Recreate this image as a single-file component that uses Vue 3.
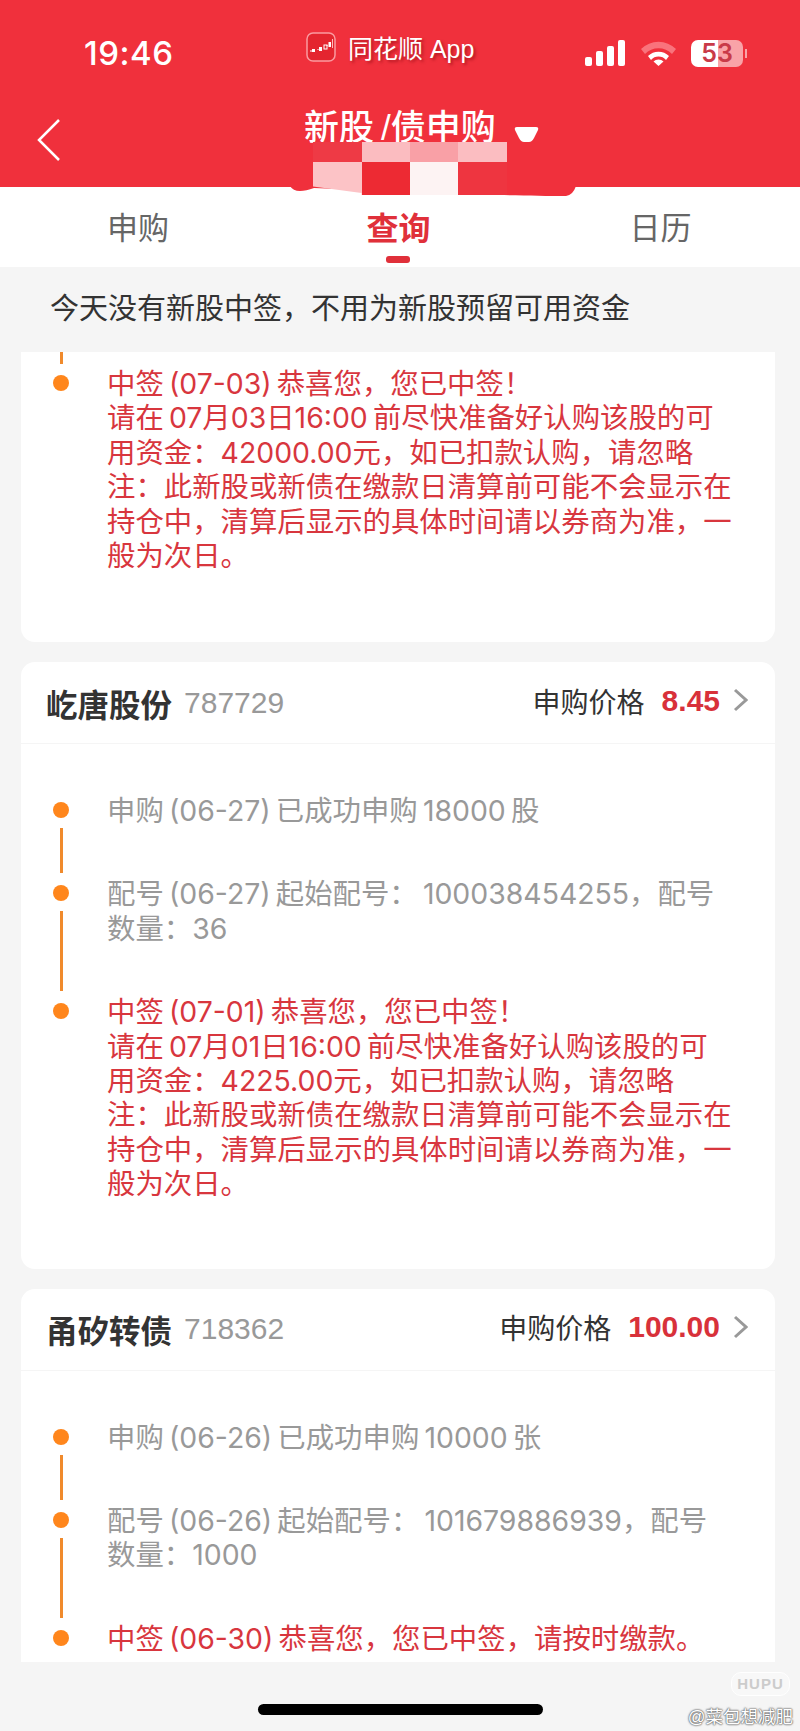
<script setup>
const cards = [
  {
    name: '屹唐股份',
    code: '787729',
    price: '8.45',
    rows: [
      { text: ['申购\u2009(06-27)\u2009已成功申购\u200918000\u2009股'], hit: false },
      { text: ['配号\u2009(06-27)\u2009起始配号：\u2009100038454255，配号', '数量：36'], hit: false },
      {
        text: [
          '中签\u2009(07-01)\u2009恭喜您，您已中签！',
          '请在\u200907月01日16:00\u2009前尽快准备好认购该股的可',
          '用资金：4225.00元，如已扣款认购，请忽略',
          '注：此新股或新债在缴款日清算前可能不会显示在',
          '持仓中，清算后显示的具体时间请以券商为准，一',
          '般为次日。',
        ],
        hit: true,
      },
    ],
  },
  {
    name: '甬矽转债',
    code: '718362',
    price: '100.00',
    rows: [
      { text: ['申购\u2009(06-26)\u2009已成功申购\u200910000\u2009张'], hit: false },
      { text: ['配号\u2009(06-26)\u2009起始配号：\u2009101679886939，配号', '数量：1000'], hit: false },
      { text: ['中签\u2009(06-30)\u2009恭喜您，您已中签，请按时缴款。'], hit: true },
    ],
  },
];

const firstCard = [
  '中签\u2009(07-03)\u2009恭喜您，您已中签！',
  '请在\u200907月03日16:00\u2009前尽快准备好认购该股的可',
  '用资金：42000.00元，如已扣款认购，请忽略',
  '注：此新股或新债在缴款日清算前可能不会显示在',
  '持仓中，清算后显示的具体时间请以券商为准，一',
  '般为次日。',
];

const mosaic = ['#ee3a45', '#fbbcc0', '#f9a0a6', '#fbbdc1', '#fcc3c6', '#ed2a33', '#fdf3f3', '#ee3540'];
</script>

<template>
  <div class="page">
    <header class="head">
      <div class="status">
        <span class="time">19:46</span>
        <div class="source">
          <svg class="app-logo" width="30" height="30" viewBox="0 0 30 30">
            <rect x="1" y="1" width="28" height="28" rx="6" fill="#e4252f" stroke="#fa9aa0" stroke-width="1.500" />
            <path d="M4 19h2M12 17v1M21 13v1" stroke="#fff" stroke-width="1" fill="none" />
            <rect x="6" y="17" width="3" height="3" fill="#fff" />
            <rect x="13" y="15" width="3" height="4" fill="#fff" />
            <rect x="18" y="13" width="3" height="4" fill="none" stroke="#fff" stroke-width="1" />
            <rect x="22.500" y="10" width="2.500" height="5" fill="#fff" />
            <path d="M26.500 7v9" stroke="#fbb" stroke-width="1" />
          </svg>
          <span class="app-name">同花顺 App</span>
        </div>
        <div class="indicators">
          <svg width="41" height="26" viewBox="0 0 41 26">
            <rect x="0" y="17" width="7" height="9" rx="2" fill="#fff" />
            <rect x="11" y="11" width="7" height="15" rx="2" fill="#fff" />
            <rect x="22" y="6" width="7" height="20" rx="2" fill="#fff" />
            <rect x="33" y="0" width="7" height="26" rx="2" fill="#fff" />
          </svg>
          <svg class="wifi" width="35" height="25" viewBox="0 0 35 25">
            <path d="M0 8a25 25 0 0 1 35 0l-4 5a19 19 0 0 0-27 0z" fill="#f9737c" />
            <path d="M7 15a15 15 0 0 1 21 0l-3 4a10 10 0 0 0-15 0z" fill="#fff" />
            <path d="M12.500 20.500a7 7 0 0 1 10 0L17.500 25z" fill="#fff" />
          </svg>
          <div class="battery">
            <span class="battery-num">53</span>
          </div>
          <i class="battery-cap"></i>
        </div>
      </div>
      <div class="nav">
        <svg class="back" width="24" height="42" viewBox="0 0 24 42">
          <path d="M22 1 2 21l20 20" fill="none" stroke="#fff" stroke-width="2.500" />
        </svg>
        <h1 class="title">新股&#8201;/债申购</h1>
        <svg class="caret" width="25" height="15" viewBox="0 0 25 15">
          <path d="M3 0h19q3 0 2 3l-4 8q-2 4-5 4h-5q-3 0-5-4L1 3Q0 0 3 0z" fill="#fff" />
        </svg>
      </div>
    </header>

    <!-- 打码的部分 -->
    <svg class="scribble" width="286" height="12" viewBox="0 0 286 12">
      <path d="M0 0h286q-3 9-10 10c-30 0-60-1-108-2L24 2q-8 3-14 3Q3 5 0 0z" fill="#f0303c" />
    </svg>
    <div class="mosaic">
      <i v-for="(color, i) in mosaic" :key="i" :style="{ background: color }"></i>
    </div>

    <nav class="tabs">
      <span class="tab">申购</span>
      <span class="tab active">查询</span>
      <span class="tab">日历</span>
    </nav>

    <p class="notice">今天没有新股中签，不用为新股预留可用资金</p>

    <main class="list">
      <section class="card card-first">
        <i class="stub"></i>
        <div class="row">
          <div class="rail"><i class="dot"></i></div>
          <p class="text hit">
            <span v-for="line in firstCard" :key="line" class="line">{{ line }}</span>
          </p>
        </div>
      </section>

      <section v-for="card in cards" :key="card.code" class="card">
        <div class="card-head">
          <span class="name">{{ card.name }}</span>
          <span class="code">{{ card.code }}</span>
          <span class="price-label">申购价格</span>
          <span class="price">{{ card.price }}</span>
          <svg class="more" width="15" height="24" viewBox="0 0 15 24">
            <path d="M2 2l11 10L2 22" fill="none" stroke="#999" stroke-width="3" />
          </svg>
        </div>
        <div class="card-body">
          <div v-for="(row, i) in card.rows" :key="i" class="row">
            <div class="rail">
              <i class="dot"></i>
              <i v-if="i < card.rows.length - 1" class="link"></i>
            </div>
            <p class="text" :class="{ hit: row.hit }">
              <span v-for="line in row.text" :key="line" class="line">{{ line }}</span>
            </p>
          </div>
        </div>
      </section>
    </main>

    <footer class="bottom">
      <i class="home-bar"></i>
      <div class="mark">
        <span class="mark-logo">HUPU</span>
        <span class="mark-user">@菜包想减肥</span>
      </div>
    </footer>
  </div>
</template>

<style scoped>
.page {
  position: relative;
  width: 800px;
  height: 1731px;
  overflow: hidden;
  background: #f5f5f5;
  font-family: "Liberation Sans", "Noto Sans CJK SC", sans-serif;
}

.head {
  height: 187px;
  background: #f0303c;
  color: #fff;
}

.status {
  display: flex;
  align-items: center;
  height: 106px;
  padding-left: 84px;
}

.time {
  width: 222px;
  font-family: Inter, sans-serif;
  font-size: 33px;
  font-weight: 500;
  letter-spacing: 0.5px;
}

.source {
  display: flex;
  align-items: center;
  gap: 12px;
  width: 279px;
  margin-top: -13px;
}

.app-name {
  font-size: 25px;
  text-shadow: 2px 2px 3px rgba(120, 0, 10, 0.5);
}

.indicators {
  display: flex;
  align-items: center;
}

.wifi {
  margin-left: 15px;
}

.battery {
  width: 52px;
  height: 27px;
  margin-left: 15px;
  border-radius: 7px;
  background: linear-gradient(90deg, #fff 52%, #f9a3a8 52%);
  text-align: center;
}

.battery-num {
  font-family: Inter, sans-serif;
  font-size: 25px;
  font-weight: 600;
  line-height: 27px;
  color: #c93a48;
}

.battery-cap {
  width: 2px;
  height: 9px;
  margin-left: 2px;
  background: #f9a3a8;
}

.nav {
  position: relative;
  display: flex;
  align-items: center;
  height: 44px;
  padding-left: 304px;
}

.back {
  position: absolute;
  left: 37px;
  top: 13px;
}

.title {
  margin: 0;
  font-size: 35px;
  font-weight: 500;
  line-height: 44px;
  white-space: nowrap;
}

.caret {
  margin: 12px 0 0 18px;
}

.scribble {
  position: absolute;
  left: 290px;
  top: 186px;
  z-index: 1;
}

.mosaic {
  position: absolute;
  left: 313px;
  top: 142px;
  z-index: 2;
  display: grid;
  grid-template-columns: 49px 48px 48px 49px;
  grid-template-rows: 20px 33px;
  clip-path: polygon(0 0, 100% 0, 100% 100%, 25% 100%, 25% 96%, 0 84%);
}

.tabs {
  display: grid;
  grid-template-columns: 276px 245px 279px;
  height: 80px;
  background: #fff;
  text-align: center;
}

.tab {
  padding-top: 25px;
  font-size: 31px;
  line-height: 34px;
  color: #666;
}

.tab.active {
  position: relative;
  font-size: 32px;
  font-weight: 700;
  color: #e0303a;
}

.tab.active::after {
  content: "";
  position: absolute;
  left: 110px;
  top: 69px;
  width: 24px;
  height: 7px;
  border-radius: 3px;
  background: #e0303a;
}

.notice {
  margin: 0;
  height: 85px;
  padding-left: 50px;
  font-size: 29px;
  line-height: 85px;
  color: #333;
}

.list {
  height: 1310px;
  overflow: hidden;
}

.card {
  margin: 0 25px 20px 21px;
  border-radius: 14px;
  background: #fff;
}

.card-first {
  height: 290px;
  border-radius: 0 0 14px 14px;
}

.stub {
  display: block;
  width: 3px;
  height: 12px;
  margin: 0 0 3px 39px;
  background: #f08a2c;
}

.card-head {
  display: flex;
  align-items: center;
  height: 81px;
  padding: 0 27px 0 25px;
  border-bottom: 1px solid #f5f5f5;
}

.name {
  font-size: 31.500px;
  font-weight: 600;
  color: #333;
}

.code {
  margin-left: 12px;
  font-size: 30px;
  color: #999;
}

.price-label {
  margin: -4px 0 0 auto;
  font-size: 28px;
  color: #333;
}

.price {
  margin: -4px 0 0 17px;
  font-size: 30px;
  font-weight: 700;
  color: #d8313a;
}

.more {
  margin: -5px 0 0 13px;
}

.card-body {
  padding: 50px 0 67px;
}

.row {
  display: flex;
  padding-bottom: 49px;
}

.row:last-child {
  padding-bottom: 0;
}

.rail {
  display: flex;
  flex-direction: column;
  align-items: center;
  flex: none;
  width: 80px;
  margin: 0 6px -49px 0;
}

.dot {
  flex: none;
  width: 16px;
  height: 16px;
  margin-top: 8px;
  border-radius: 50%;
  background: #ff861c;
}

.link {
  flex: 1;
  width: 3px;
  margin: 10px 0 4px;
  background: #f08a2c;
}

.text {
  margin: 0;
  font-family: Inter, "Noto Sans CJK SC", sans-serif;
  font-size: 28.400px;
  line-height: 34.400px;
  color: #999;
}

.text.hit {
  color: #d8363e;
}

.line {
  display: block;
  white-space: nowrap;
}

.bottom {
  position: relative;
  height: 69px;
}

.home-bar {
  position: absolute;
  left: 258px;
  top: 42px;
  width: 285px;
  height: 11px;
  border-radius: 6px;
  background: #000;
}

.mark {
  position: absolute;
  right: 7px;
  top: 10px;
  display: flex;
  flex-direction: column;
  align-items: flex-end;
}

.mark-logo {
  width: 57px;
  height: 22px;
  margin-right: 3px;
  border: 1px solid #fff;
  border-radius: 10px;
  background: #f8f8f8;
  font-size: 15px;
  font-weight: 700;
  letter-spacing: 1px;
  line-height: 22px;
  text-align: center;
  color: #ccc;
}

.mark-user {
  margin-top: 11px;
  font-size: 17.500px;
  line-height: 20px;
  color: #fff;
  text-shadow: 0 0 2px #666, 0 0 2px #666, 0 0 1px #666;
}
</style>
